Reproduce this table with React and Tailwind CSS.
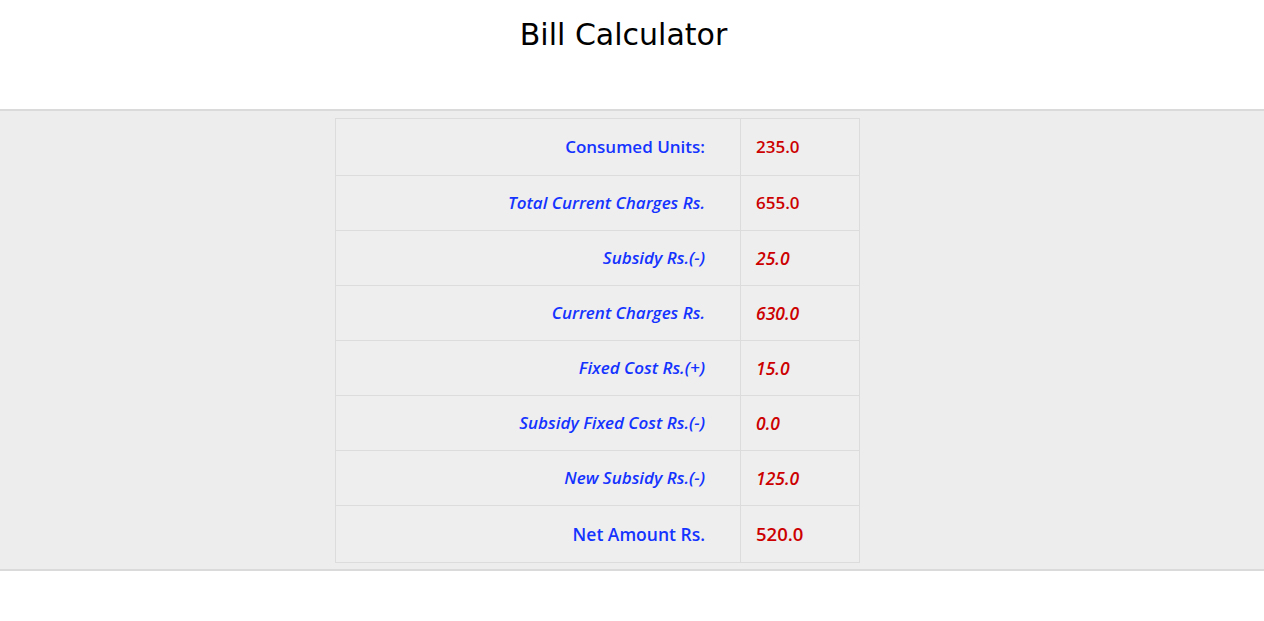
import React from "react";

const rows = [
  { label: "Consumed Units:", value: "235.0", italic: false, big: false },
  { label: "Total Current Charges Rs.", value: "655.0", italic: true },
  { label: "Subsidy Rs.(-)", value: "25.0", italic: true, vitalic: true },
  { label: "Current Charges Rs.", value: "630.0", italic: true, vitalic: true },
  { label: "Fixed Cost Rs.(+)", value: "15.0", italic: true, vitalic: true },
  { label: "Subsidy Fixed Cost Rs.(-)", value: "0.0", italic: true, vitalic: true },
  { label: "New Subsidy Rs.(-)", value: "125.0", italic: true, vitalic: true },
  { label: "Net Amount Rs.", value: "520.0", italic: false, big: true },
];

export default function App() {
  return (
    <div className="min-h-[621px] bg-white">
      <div className="h-[109px] pt-[17px] pr-[17px] text-center">
        <h1
          className="text-[30px] leading-[36px] text-black"
          style={{ fontFamily: '"DejaVu Sans", Verdana, sans-serif' }}
        >
          Bill Calculator
        </h1>
      </div>
      <div className="border-y-2 border-[#dadada] bg-[#ededed] pt-[7px] pb-[6px]">
        <table
          className="ml-[335px] w-[525px] border-collapse border border-[#dcdcdc] bg-[#eeeeee]"
          style={{ fontFamily: '"Open Sans", "DejaVu Sans", sans-serif' }}
        >
          <tbody>
            {rows.map((r, i) => {
              const edge = i === 0 || i === rows.length - 1;
              return (
                <tr key={i} className={edge ? "h-[57px]" : "h-[55px]"}>
                  <td
                    className={`w-[405px] border border-[#dcdcdc] pr-[35px] text-right font-semibold text-[#1433ff] ${
                      r.italic ? "italic text-[17px]" : r.big ? "text-[17.5px]" : "text-[17px]"
                    }`}
                  >
                    {r.label}
                  </td>
                  <td
                    className={`border border-[#dcdcdc] pl-[15px] text-left font-semibold text-[#cc0000] ${
                      r.vitalic ? "italic text-[17.5px]" : r.big ? "text-[18.5px]" : "text-[17px]"
                    }`}
                  >
                    {r.value}
                  </td>
                </tr>
              );
            })}
          </tbody>
        </table>
      </div>
    </div>
  );
}
